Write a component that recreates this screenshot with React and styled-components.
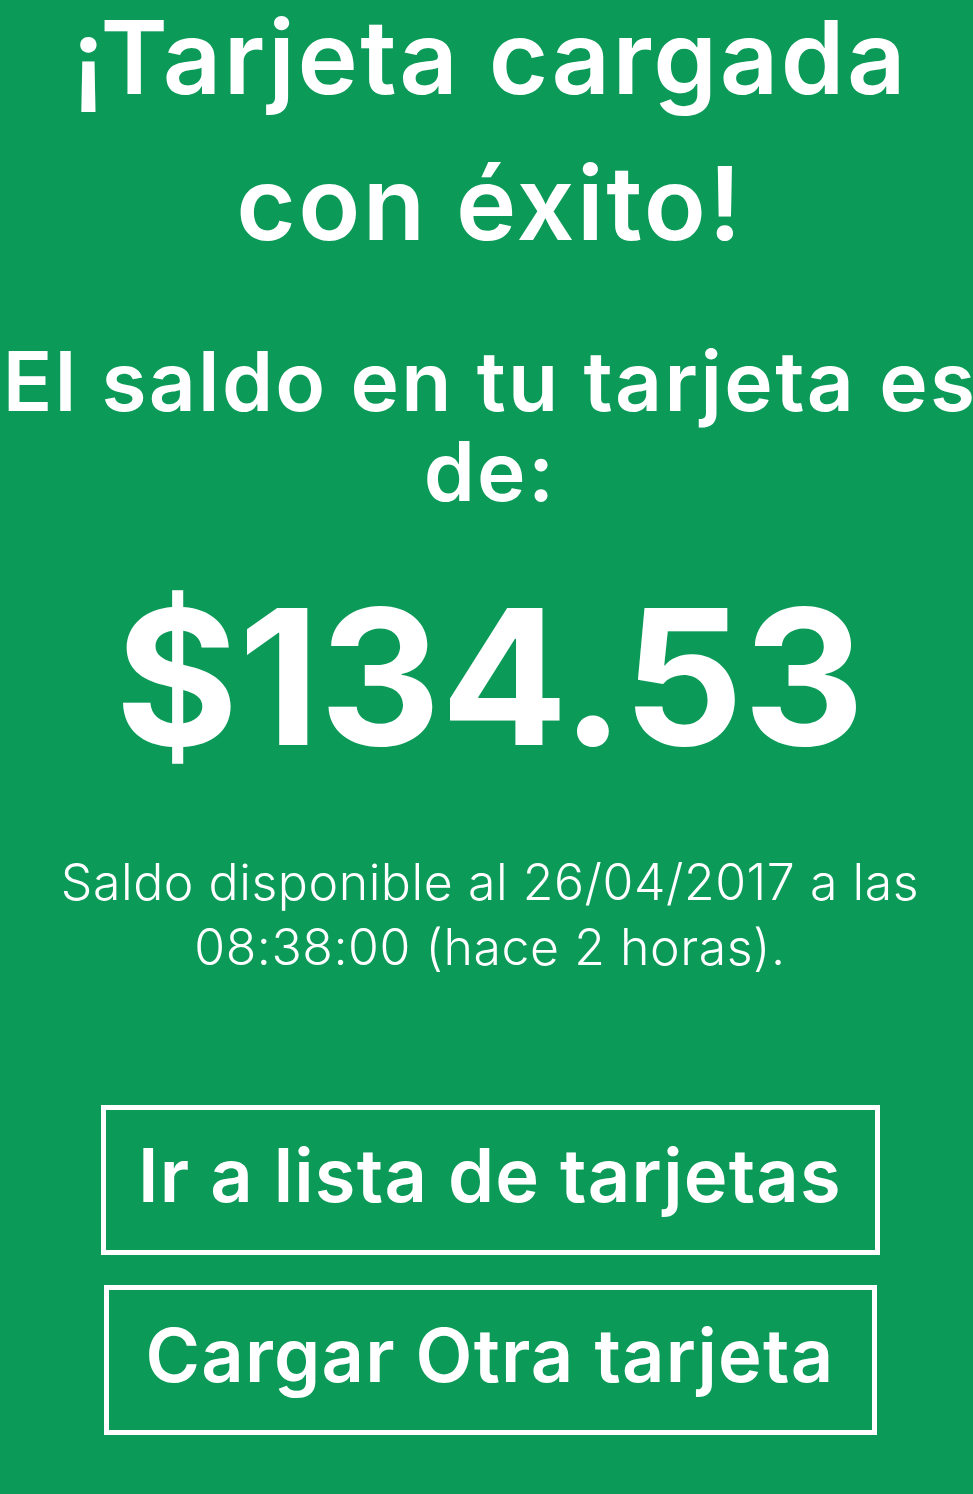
import React from 'react'
import styled, {createGlobalStyle} from 'styled-components'

const GlobalStyle = createGlobalStyle`
  html, body {
    margin: 0;
    padding: 0;
    background: #0c9a59;
    overflow-x: hidden;
  }
  body {
    font-family: Inter, "Liberation Sans", sans-serif;
    color: #ffffff;
  }
`

const Page = styled.div`
  width: 980px;
  min-height: 1494px;
  background: #0c9a59;
  display: flex;
  flex-direction: column;
  align-items: center;
  text-align: center;
`

const Title = styled.h1`
  margin: -16px 0 0;
  font-size: 102px;
  line-height: 146px;
  font-weight: 600;
  letter-spacing: 2.5px;
`

const Subtitle = styled.h2`
  margin: 61px 0 0;
  width: 1040px;
  font-size: 82px;
  line-height: 90px;
  font-weight: 600;
  letter-spacing: 2.3px;
`

const Amount = styled.div`
  margin-top: 66px;
  font-size: 188px;
  line-height: 1;
  font-weight: 700;
`

const Note = styled.p`
  margin: 79px 0 0;
  font-size: 50px;
  line-height: 65px;
  font-weight: 300;
  letter-spacing: 0.55px;
`

const Actions = styled.div`
  margin-top: 125px;
  display: flex;
  flex-direction: column;
  align-items: center;
  gap: 30px;
`

const Button = styled.button`
  box-sizing: border-box;
  width: ${p => p.$w}px;
  height: 150px;
  border: 5px solid #ffffff;
  background: transparent;
  color: #ffffff;
  font-family: inherit;
  font-size: 74px;
  font-weight: 600;
  letter-spacing: 1.2px;
  padding: 0 0 10px;
`

export default function App() {
  return (
    <Page>
      <GlobalStyle />
      <Title>¡Tarjeta cargada<br />con éxito!</Title>
      <Subtitle>El saldo en tu tarjeta es de:</Subtitle>
      <Amount>$134.53</Amount>
      <Note>Saldo disponible al 26/04/2017 a las<br />08:38:00 (hace 2 horas).</Note>
      <Actions>
        <Button $w={779}>Ir a lista de tarjetas</Button>
        <Button $w={773}>Cargar Otra tarjeta</Button>
      </Actions>
    </Page>
  )
}
